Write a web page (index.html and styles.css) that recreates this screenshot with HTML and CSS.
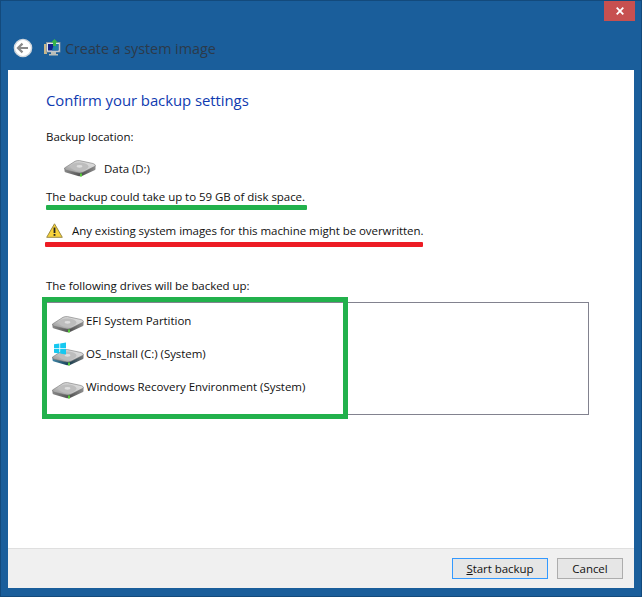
FILE: index.html
```html
<!DOCTYPE html>
<html lang="en">
<head>
<meta charset="utf-8">
<title>Create a system image</title>
<link rel="stylesheet" href="styles.css">
</head>
<body>
<svg class="defs" width="0" height="0" aria-hidden="true">
  <defs>
    <linearGradient id="top" x1="0" y1="1" x2="1" y2="0"><stop offset="0" stop-color="#8d8d8d"/><stop offset=".45" stop-color="#c8c8c8"/><stop offset="1" stop-color="#e4e4e4"/></linearGradient>
    <linearGradient id="edge" x1="0" y1="0" x2="1" y2="0"><stop offset="0" stop-color="#8a8a8a"/><stop offset=".55" stop-color="#4f4f4f"/><stop offset="1" stop-color="#8f8f8f"/></linearGradient>
    <linearGradient id="edgeblue" x1="0" y1="0" x2="1" y2="0"><stop offset="0" stop-color="#3f86a8"/><stop offset=".55" stop-color="#173c4e"/><stop offset="1" stop-color="#7a7a7a"/></linearGradient>
    <symbol id="drive" viewBox="0 0 32 17">
      <path d="M.5 8 L.5 11 Q.5 12 2 12.500 L14 16 Q16 16.700 18 16 L31 10 Q31.500 9.500 31.500 9 L31.500 6 Z" fill="url(#edge)"/>
      <path d="M.5 8 L11 1.300 Q13 .3 15.500 .6 L29 3.500 Q31.500 4.300 31.500 6 L19 12.300 Q16.500 13.300 14 12.800 L2 10.300 Q.5 9.800 .5 8Z" fill="url(#top)" stroke="#777" stroke-width=".6"/>
      <ellipse cx="15.500" cy="6.600" rx="9" ry="4.200" fill="#bdbdbd"/>
      <ellipse cx="15.500" cy="6.300" rx="3" ry="1.400" fill="#dedede"/>
      <rect x="16" y="13.500" width="2" height="3" fill="#55c93a"/>
    </symbol>
    <symbol id="drive-os" viewBox="0 0 32 17">
      <path d="M.5 8 L.5 11 Q.5 12 2 12.500 L14 16 Q16 16.700 18 16 L31 10 Q31.500 9.500 31.500 9 L31.500 6 Z" fill="url(#edgeblue)"/>
      <path d="M.5 8 L11 1.300 Q13 .3 15.500 .6 L29 3.500 Q31.500 4.300 31.500 6 L19 12.300 Q16.500 13.300 14 12.800 L2 10.300 Q.5 9.800 .5 8Z" fill="url(#top)" stroke="#777" stroke-width=".6"/>
      <ellipse cx="15.500" cy="6.600" rx="9" ry="4.200" fill="#bdbdbd"/>
      <ellipse cx="15.500" cy="6.300" rx="3" ry="1.400" fill="#dedede"/>
      <rect x="16" y="13.500" width="2" height="3" fill="#55c93a"/>
    </symbol>
  </defs>
</svg>
<main class="window">
  <header class="titlebar">
    <button class="close" aria-label="Close">
      <svg width="8" height="8" viewBox="0 0 8 8"><path d="M.7 .7 L7.300 7.300 M7.300 .7 L.7 7.300" stroke="#fff" stroke-width="1.800"/></svg>
    </button>
    <div class="nav">
      <svg class="back" width="20" height="20" viewBox="0 0 20 20">
        <circle cx="10" cy="10" r="8.600" fill="#fff" stroke="#cfd6dc" stroke-width="1.400"/>
        <path d="M5 10 H15 M9.500 5.600 L5 10 L9.500 14.400" fill="none" stroke="#8a8a8a" stroke-width="2.200"/>
      </svg>
      <svg class="appicon" width="17" height="17" viewBox="0 0 17 17">
        <rect x="0" y="5" width="3" height="10" fill="#c9b78a"/>
        <rect x="2.500" y="3.500" width="13.500" height="9.500" fill="#dfe5ea" stroke="#8c96a0" stroke-width=".8"/>
        <rect x="4" y="5" width="10.500" height="6.500" fill="#12228c"/>
        <path d="M10 5 H14.500 V11.500 H8Z" fill="#1f7fa8"/>
        <path d="M7 13 h5 v2 h2 v1.500 h-9 v-1.500 h2z" fill="#b9bdb8"/>
        <path d="M10.500 0 L14 3.500 H12 V7 H9 V3.500 H7Z" fill="#35b44a"/>
      </svg>
      <span class="wintitle">Create a system image</span>
    </div>
  </header>

  <section class="content">
    <h1 class="heading">Confirm your backup settings</h1>
    <p class="label">Backup location:</p>
    <div class="location">
      <svg class="drive-lg"><use href="#drive"/></svg>
      <span>Data (D:)</span>
    </div>
    <p class="space"><span class="mark mark-green">The backup could take up to 59 GB of disk space.</span></p>
    <div class="warning">
      <svg width="17" height="15" viewBox="0 0 17 15">
        <path d="M8.500 .8 L16.300 14.300 H.7Z" fill="#f7d23a" stroke="#9b8a45" stroke-width="1" stroke-linejoin="round"/>
        <rect x="7.600" y="4.500" width="1.800" height="5.500" fill="#222"/>
        <rect x="7.600" y="11" width="1.800" height="1.800" fill="#222"/>
      </svg>
      <span class="mark mark-red">Any existing system images for this machine might be overwritten.</span>
    </div>
    <p class="label-drives">The following drives will be backed up:</p>
    <div class="listbox">
      <ul class="drives">
        <li><svg class="drive-sm"><use href="#drive"/></svg><span>EFI System Partition</span></li>
        <li>
          <span class="os-icon">
            <svg class="drive-sm"><use href="#drive-os"/></svg>
            <svg class="winlogo" width="12" height="13" viewBox="0 0 13 13"><path d="M0 2 L5.800 1.100 V6.100 H0Z M6.700 1 L13 0 V6.100 H6.700Z M0 7 H5.800 V12 L0 11.100Z M6.700 7 H13 V13 L6.700 12Z" fill="#16c8f0"/></svg>
          </span>
          <span>OS_Install (C:) (System)</span>
        </li>
        <li><svg class="drive-sm"><use href="#drive"/></svg><span>Windows Recovery Environment (System)</span></li>
      </ul>
      <div class="highlight"></div>
    </div>
  </section>

  <footer class="actions">
    <button class="btn btn-default"><u>S</u>tart backup</button>
    <button class="btn">Cancel</button>
  </footer>
</main>
</body>
</html>
```
FILE: styles.css
```css
* { box-sizing: border-box; }
html, body { margin: 0; padding: 0; }
body { width: 642px; height: 597px; overflow: hidden; font-family: "Open Sans", "Noto Sans", sans-serif; font-size: 11.5px; letter-spacing: -.05px; color: #111; }
.defs { position: absolute; }
.window { width: 642px; height: 597px; display: flex; flex-direction: column; background: #1a5e9b; border: 1px solid #134a7c; padding: 0 7px 8px 7px; }
.titlebar { height: 69px; position: relative; flex: none; }
.close { position: absolute; top: 0; right: -1px; width: 31px; height: 20px; border: 0; padding: 0; background: #c75050; display: flex; align-items: center; justify-content: center; }
.close svg { display: block; }
.nav { position: absolute; left: 5px; top: 37px; display: flex; align-items: center; }
.back { display: block; }
.appicon { display: block; margin-left: 11px; margin-top: -2px; }
.wintitle { margin-left: 4px; font-size: 14.4px; color: #2c3a4a; }
.content { flex: 1; background: #fff; padding: 20px 0 0 38px; position: relative; }
.heading { margin: 0; font-weight: 400; font-size: 14.9px; line-height: 20px; color: #0f3bb0; }
.label { margin: 19px 0 0; line-height: 16px; }
.location { display: flex; align-items: center; margin: 13px 0 0 18px; height: 20px; }
.location span { margin-left: 8px; }
.drive-lg { width: 32px; height: 17px; display: block; }
.space { margin: 11px 0 0; line-height: 16px; }
.mark { position: relative; display: inline-block; }
.mark::after { content: ""; position: absolute; left: 0; right: 0; height: 5px; border-radius: 1px; }
.mark-green::after { background: #22b14c; bottom: -5px; right: -2px; }
.mark-red::after { background: #ed1c24; left: -27px; bottom: -9px; }
.warning { display: flex; align-items: center; gap: 9px; margin-top: 17px; height: 16px; }
.warning svg { display: block; flex: none; }
.label-drives { margin: 40px 0 0; line-height: 16px; }
.listbox { width: 543px; height: 113px; margin-top: 8px; border: 1px solid #82828f; position: relative; }
.drives { list-style: none; margin: 0; padding: 1px 0 0 5px; }
.drives li { display: flex; align-items: center; gap: 2px; height: 33px; }
.drive-sm { width: 32px; height: 17px; display: block; flex: none; margin-top: 8px; }
.os-icon { position: relative; display: block; width: 32px; height: 25px; flex: none; }
.winlogo { position: absolute; left: 2px; top: 1px; }
.highlight { position: absolute; left: -5px; top: -6px; width: 306px; height: 122px; border: 5px solid #22b14c; }
.actions { flex: none; height: 40px; background: #f0f0f0; border-top: 1px solid #dfdfdf; display: flex; justify-content: flex-end; align-items: center; gap: 9px; padding-right: 11px; }
.btn { height: 21px; width: 66px; padding: 0; background: #e6e6e6; border: 1px solid #adadad; font: inherit; letter-spacing: inherit; color: #111; }
.btn-default { width: 96px; border-color: #3399ff; }
```
